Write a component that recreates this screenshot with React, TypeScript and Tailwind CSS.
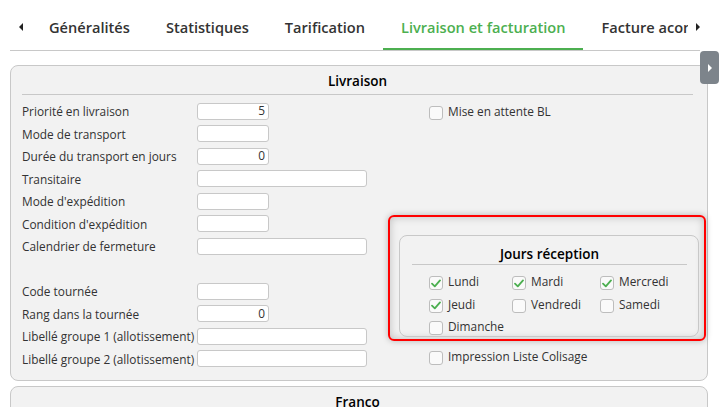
import type { ReactNode } from "react";

type Field = { label: string; value?: string; wide?: boolean } | null;

const fields: Field[] = [
  { label: "Priorité en livraison", value: "5" },
  { label: "Mode de transport" },
  { label: "Durée du transport en jours", value: "0" },
  { label: "Transitaire", wide: true },
  { label: "Mode d'expédition" },
  { label: "Condition d'expédition" },
  { label: "Calendrier de fermeture", wide: true },
  null,
  { label: "Code tournée" },
  { label: "Rang dans la tournée", value: "0" },
  { label: "Libellé groupe 1 (allotissement)", wide: true },
  { label: "Libellé groupe 2 (allotissement)", wide: true },
];

const days = [
  { name: "Lundi", checked: true },
  { name: "Mardi", checked: true },
  { name: "Mercredi", checked: true },
  { name: "Jeudi", checked: true },
  { name: "Vendredi", checked: false },
  { name: "Samedi", checked: false },
  { name: "Dimanche", checked: false },
];

const tabs = ["Généralités", "Statistiques", "Tarification", "Livraison et facturation", "Facture acompte"];

function Checkbox({ checked, label }: { checked?: boolean; label: string }) {
  return (
    <label className="flex h-[22.5px] items-center gap-[5px] pt-[2px] text-[11.85px] text-[#333]">
      <span className="mt-[2px] flex h-[14px] w-[14px] shrink-0 items-center justify-center rounded-[3px] border border-[#bdbdbd] bg-[#fafafa]">
        {checked && (
          <svg width="10" height="9" viewBox="0 0 10 9" fill="none">
            <path d="M1 4.6 L3.8 7.4 L9 1.4" stroke="#4caf50" strokeWidth="1.8" strokeLinecap="round" strokeLinejoin="round" />
          </svg>
        )}
      </span>
      {label}
    </label>
  );
}

function Panel({ title, children }: { title: string; children?: ReactNode }) {
  return (
    <section className="ml-[10px] w-[698px] rounded-[8px] border border-[#c8c8c8] bg-[#f2f2f2]">
      <h2 className="ml-[11px] mr-[14px] flex h-[29px] items-center justify-center border-b border-[#c8c8c8] pt-[2px] text-[13.5px] font-semibold text-black">
        {title}
      </h2>
      {children}
    </section>
  );
}

export default function App() {
  return (
    <div className="relative h-[407px] w-[726px] overflow-hidden bg-white font-['Open_Sans',sans-serif]">
      {/* tab strip */}
      <div className="ml-[10px] flex h-[51px] w-[690px] border-b border-[#c8c8c8]">
        <button className="flex w-[21px] shrink-0 items-center justify-center pt-[3px]">
          <span className="h-0 w-0 border-y-[4px] border-r-[4px] border-y-transparent border-r-[#222]" />
        </button>
        <div className="flex flex-1 overflow-hidden">
          {tabs.map((t) => {
            const active = t === "Livraison et facturation";
            return (
              <div
                key={t}
                className={
                  active
                    ? "-mb-px flex h-[51px] shrink-0 items-center whitespace-nowrap border-b-[3px] border-[#4caf50] px-[18px] pt-[8px] text-[14.6px] font-semibold text-[#4caf50]"
                    : "-mb-px flex h-[51px] shrink-0 items-center whitespace-nowrap border-b-[3px] border-transparent px-[18px] pt-[8px] text-[14.6px] font-semibold text-[#333]"
                }
              >
                {t}
              </div>
            );
          })}
        </div>
        <button className="flex w-[12px] shrink-0 items-center justify-end pt-[3px]">
          <span className="h-0 w-0 border-y-[4px] border-l-[4px] border-y-transparent border-l-[#222]" />
        </button>
      </div>

      {/* side drawer handle */}
      <div className="absolute left-[700px] top-[51px] flex h-[33px] w-[19px] items-center justify-center rounded-[4px] bg-[#7d848b]">
        <span className="h-0 w-0 border-y-[4px] border-l-[4px] border-y-transparent border-l-white" />
      </div>

      <div className="mt-[14px]">
        <Panel title="Livraison">
          <div className="flex pb-[10px] pt-[5px]">
            <div className="w-[377px] pl-[11px]">
              {fields.map((f, i) =>
                f ? (
                  <div key={i} className="flex h-[22.5px] items-center">
                    <span className="w-[175px] shrink-0 pt-[2px] text-[11.85px] text-[#333]">{f.label}</span>
                    <span
                      className={
                        f.wide
                          ? "flex h-[17px] w-[170px] items-center justify-end rounded-[3px] border border-[#c8c8c8] bg-white pr-[3px] text-[11.85px] text-[#333]"
                          : "flex h-[17px] w-[72px] items-center justify-end rounded-[3px] border border-[#c8c8c8] bg-white pr-[3px] text-[11.85px] text-[#333]"
                      }
                    >
                      {f.value}
                    </span>
                  </div>
                ) : (
                  <div key={i} className="h-[22.5px]" />
                ),
              )}
            </div>

            <div className="flex w-[318px] flex-col">
              <div className="pl-[41px]">
                <Checkbox label="Mise en attente BL" />
              </div>

              <div className="mt-[92.5px] h-[126px] rounded-[6px] border-2 border-[#ff0000] shadow-[0_0_6px_rgba(0,0,0,0.25),inset_0_0_8px_rgba(0,0,0,0.22)]">
                <div className="ml-[9px] mt-[18px] h-[102px] w-[300px] rounded-[8px] border border-[#c8c8c8]">
                  <h3 className="ml-[12px] mr-[11px] flex h-[29px] items-center justify-center border-b border-[#c8c8c8] pt-[9px] text-[13.5px] font-semibold text-black">
                    Jours réception
                  </h3>
                  <div className="grid grid-cols-[83px_88px_1fr] pl-[29px] pt-[5px]">
                    {days.map((d) => (
                      <Checkbox key={d.name} label={d.name} checked={d.checked} />
                    ))}
                  </div>
                </div>
              </div>

              <div className="mt-[4px] pl-[41px]">
                <Checkbox label="Impression Liste Colisage" />
              </div>
            </div>
          </div>
        </Panel>
      </div>

      <div className="mt-[5px]">
        <Panel title="Franco" />
      </div>
    </div>
  );
}
